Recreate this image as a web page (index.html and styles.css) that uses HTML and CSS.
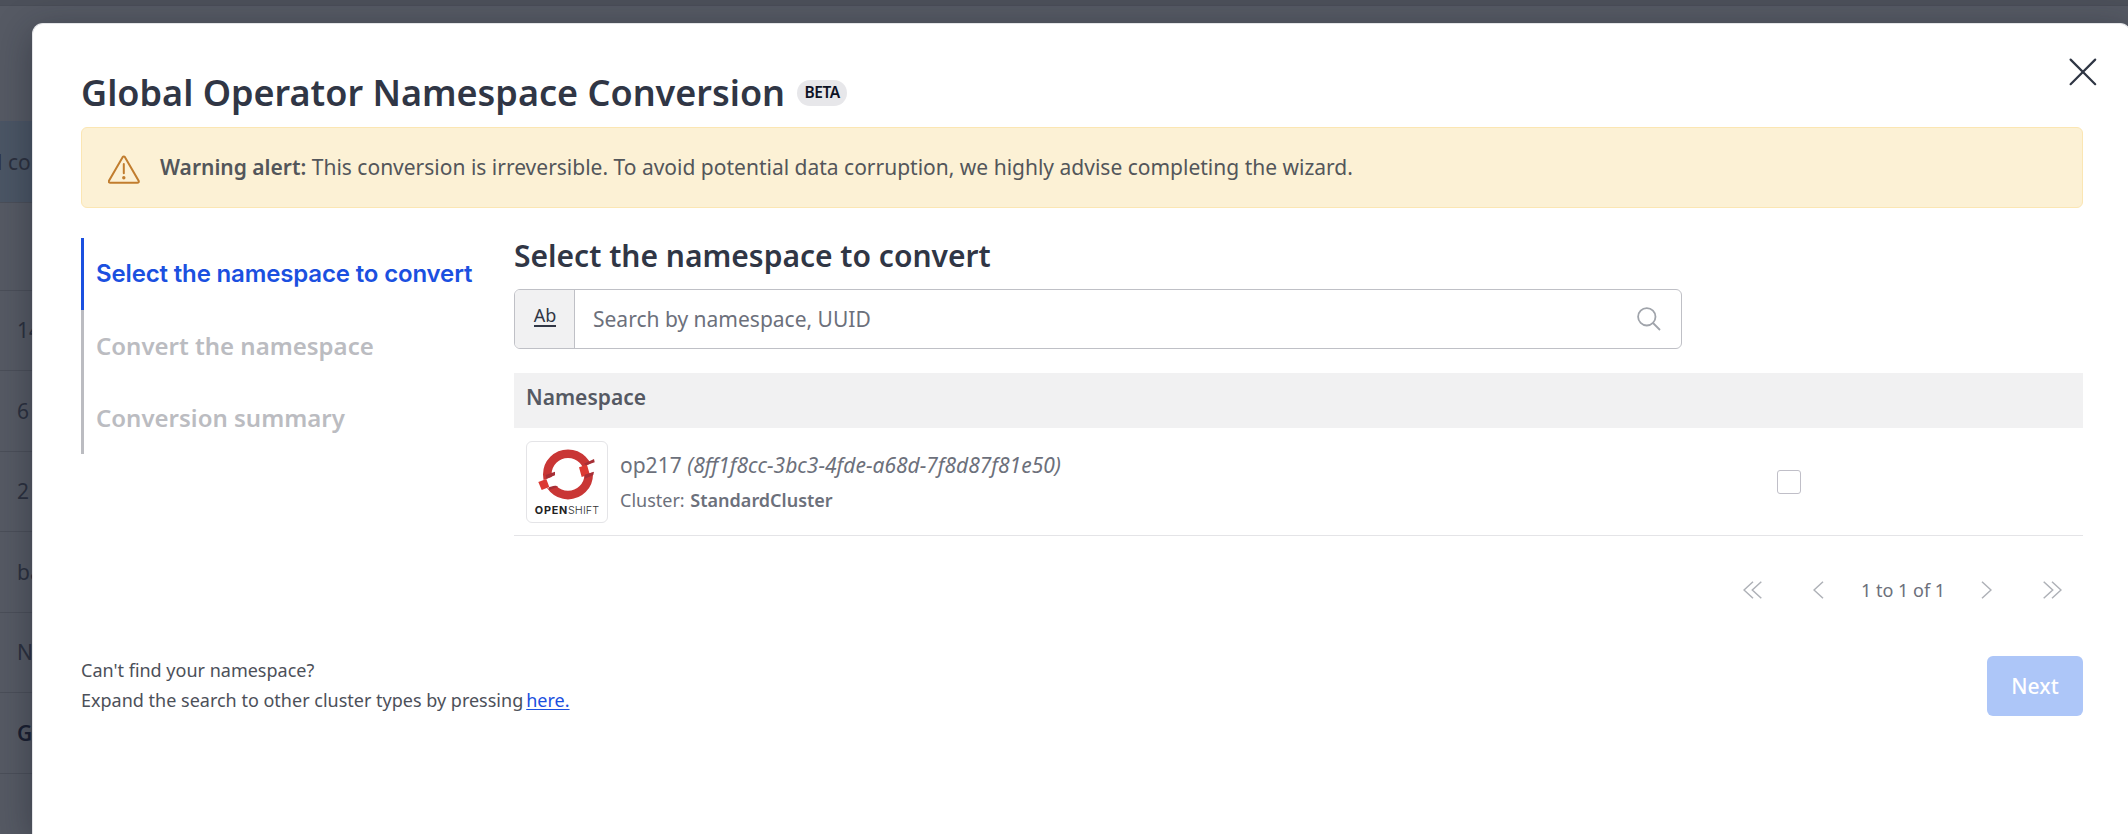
FILE: index.html
```html
<!DOCTYPE html>
<html lang="en">
<head>
<meta charset="utf-8">
<title>Global Operator Namespace Conversion</title>
<link rel="stylesheet" href="styles.css">
</head>
<body>
<div class="backdrop">
  <div class="bg-top"></div>
  <div class="bg-row bg-selected"><span class="bg-co">l co</span></div>
  <div class="bg-row bg-blank"></div>
  <div class="bg-row"><span>14</span></div>
  <div class="bg-row"><span>6</span></div>
  <div class="bg-row"><span>2</span></div>
  <div class="bg-row"><span>ba</span></div>
  <div class="bg-row"><span>N</span></div>
  <div class="bg-row"><b>G</b></div>
</div>
<div class="modal">
  <button class="close" aria-label="Close"><svg width="28" height="28" viewBox="0 0 28 28"><path d="M1.6 1.6 26.2 26.2M26.2 1.6 1.6 26.2"/></svg></button>
  <header class="title-row"><h1>Global Operator Namespace Conversion</h1><span class="badge">BETA</span></header>
  <div class="alert">
    <svg class="warn" width="34" height="30" viewBox="0 0 34 30"><path d="M14.6 2.2Q15.8.6 17 2.2L30.6 25.7Q31.4 27.8 29.2 27.8H2.4Q.2 27.8 1 25.7Z"/><path d="M15.8 9v9.3"/><circle cx="15.8" cy="22.7" r="1.7"/></svg>
    <p class="alert-text"><b>Warning alert:</b> This conversion is irreversible. To avoid potential data corruption, we highly advise completing the wizard.</p>
  </div>
  <div class="body">
    <nav class="steps">
      <div class="step active">Select the namespace to convert</div>
      <div class="step">Convert the namespace</div>
      <div class="step">Conversion summary</div>
    </nav>
    <main class="content">
      <h2>Select the namespace to convert</h2>
      <div class="search">
        <div class="prefix"><span>Ab</span></div>
        <div class="field">Search by namespace, UUID</div>
        <svg class="lens" width="24" height="24" viewBox="0 0 24 24"><circle cx="9.8" cy="9.8" r="8.7"/><path d="m16 16 7 7"/></svg>
      </div>
      <div class="thead">Namespace</div>
      <div class="row">
        <div class="logo">
          <svg width="80" height="80" viewBox="1 1 80 80">
            <circle cx="42" cy="33.4" r="20.7" fill="none" stroke="#c93635" stroke-width="8.6"/>
            <path fill="#fff" d="M60 24.5 70 20.5V30.3L62 33ZM15 40 29.5 34.5 30 44.5 22 47.5Z"/>
            <path fill="#dc3a33" d="m53 26.3 8-2.6 2.7 9.6-8 2.7ZM12.3 41l8-3 3 8-7.6 3Z"/>
            <path fill="#a62f36" d="m58 22.7 10-4.7.7 3.3-8.7 3ZM58.7 33.7l9.3-3-.7 3.3-8.6 3.7ZM19.7 34l9.3-3.3v3.6l-8.7 3.4ZM22.7 46.3l5.6-1.6 4 1-9 3.3Z"/>
            <text x="8.8" y="72.9" textLength="32.4" lengthAdjust="spacing" class="logo-text logo-bold">OPEN</text>
            <text x="42" y="72.9" textLength="31" lengthAdjust="spacing" class="logo-text">SHIFT</text>
          </svg>
        </div>
        <div class="info">
          <div class="ns">op217 <i>(8ff1f8cc-3bc3-4fde-a68d-7f8d87f81e50)</i></div>
          <div class="cluster">Cluster: <b>StandardCluster</b></div>
        </div>
        <div class="check"></div>
      </div>
      <div class="pager">
        <svg width="19" height="18" viewBox="0 0 19 18"><path d="M10 .7 1 9l9 8.3M18.3.7 9.3 9l9 8.3"/></svg>
        <svg class="prev" width="11" height="18" viewBox="0 0 11 18"><path d="M10 .7 1 9l9 8.3"/></svg>
        <span>1 to 1 of 1</span>
        <svg class="forward" width="11" height="18" viewBox="0 0 11 18"><path d="m1 .7 9 8.3-9 8.3"/></svg>
        <svg class="last" width="19" height="18" viewBox="0 0 19 18"><path d="m.7.7 9 8.3-9 8.3M9 .7 18 9l-9 8.3"/></svg>
      </div>
    </main>
  </div>
  <footer class="footer">
    <div class="help"><p>Can't find your namespace?</p><p>Expand the search to other cluster types by pressing<a href="#">here.</a></p></div>
    <button class="next">Next</button>
  </footer>
</div>
</body>
</html>
```
FILE: styles.css
```css
* { box-sizing: border-box; margin: 0; padding: 0; }
html, body { width: 100%; height: 834px; overflow: hidden; }
body { background: #565a64; font-family: "Noto Sans", sans-serif; font-size: 21px; color: #4c5059; position: relative; }
svg { display: block; fill: none; flex: none; }

.backdrop { height: 834px; overflow: hidden; color: #2b303e; }
.bg-top { height: 122px; border-bottom: 1px solid #4b5566; background: linear-gradient(#4c505a 0 5px, #494d57 5px 6px, transparent 6px); }
.bg-row { height: 80.5px; border-bottom: 1px solid #4b4f59; padding-left: 17px; display: flex; align-items: center; white-space: nowrap; }
.bg-selected { background: #4b5665; padding-left: 0; }
.bg-co { margin-left: -3px; }
.bg-blank { height: 88px; }
.bg-row b { color: #191e30; }

.modal { position: absolute; left: 32px; top: 23px; width: 2099px; height: 811px; padding: 47px 47px 0 48px; background: #fff; border: 1px solid #e4e5e8; border-bottom: 0; border-radius: 11px 11px 0 0; box-shadow: 0 8px 36px rgba(20, 24, 36, .42); }
.close { position: absolute; left: 2036px; top: 34px; background: none; border: 0; }
.close path { stroke: #2f3644; stroke-width: 2.2; stroke-linecap: round; }

.title-row { height: 56px; display: flex; align-items: center; padding-bottom: 12px; }
h1 { font-size: 36px; font-weight: 600; line-height: 44px; color: #303645; white-space: nowrap; }
.badge { margin-left: 12px; width: 50px; height: 26px; border-radius: 13px; background: #e7e7ea; color: #0d1224; font-size: 15.5px; font-weight: 600; letter-spacing: -.4px; line-height: 25px; text-align: center; }

.alert { height: 81px; border: 1px solid #fbe6b3; border-radius: 6px; background: #fcf1d5; display: flex; align-items: center; padding-left: 26px; color: #53565a; }
.warn { margin-top: 4px; }
.warn path { stroke: #c17d2e; stroke-width: 2; stroke-linecap: round; }
.warn circle { fill: #c17d2e; }
.alert-text { margin-left: 18px; padding-bottom: 1px; white-space: nowrap; }
b { font-weight: 600; }

.body { display: flex; margin-top: 30px; }
.steps { width: 433px; flex: none; }
.step { height: 72px; border-left: 3px solid #bbbcc1; padding-left: 12px; line-height: 71px; font-size: 24px; font-weight: 600; color: #bbbcc1; white-space: nowrap; }
.step.active { border-color: #1b50e0; color: #1b50e0; font-family: Inter, sans-serif; letter-spacing: -.15px; }
.content { flex: 1; }
h2 { font-size: 30px; font-weight: 600; line-height: 36px; height: 51px; color: #303645; white-space: nowrap; }
.search { width: 1168px; height: 60px; border: 1px solid #bfc0c6; border-radius: 6px; display: flex; align-items: center; overflow: hidden; }
.prefix { width: 60px; height: 58px; background: #f1f1f2; border-right: 1px solid #bfc0c6; display: flex; justify-content: center; padding: 14px 0 0 1px; color: #303645; font-size: 18px; line-height: 22px; }
.prefix span { height: 23px; border-bottom: 2px solid #303645; }
.field { flex: 1; padding-left: 18px; color: #6c707b; }
.lens { margin-right: 20px; }
.lens circle, .lens path { stroke: #a0a4ab; stroke-width: 1.8; }
.thead { margin-top: 24px; height: 55px; background: #f1f1f2; padding-left: 12px; line-height: 49px; font-weight: 600; color: #555963; }
.row { height: 108px; border-bottom: 1px solid #e4e4e7; display: flex; align-items: center; padding-left: 12px; }
.logo { width: 82px; height: 82px; border: 1px solid #e4e4e7; border-radius: 6px; }
.logo-text { font-family: Inter, sans-serif; font-size: 10.8px; font-weight: 300; fill: #333; }
.logo-bold { font-weight: 700; fill: #222; }
.info { margin-left: 12px; width: 1157px; color: #6c707b; white-space: nowrap; }
.ns { line-height: 36px; }
.cluster { font-size: 18px; line-height: 34px; }
.cluster b { margin-left: 1px; }
.check { width: 24px; height: 24px; border: 1px solid #c0bfc8; border-radius: 3px; }
.pager { height: 108px; display: flex; align-items: center; padding-left: 1229px; font-size: 18px; color: #6c707b; white-space: nowrap; }
.pager path { stroke: #aeb1b7; stroke-width: 1.5; }
.prev { margin-left: 51px; }
.pager span { margin-left: 37px; width: 84px; }
.forward { margin-left: 36px; }
.last { margin-left: 51px; }

.footer { display: flex; justify-content: space-between; margin-top: 12px; font-size: 18px; line-height: 30px; }
.help { margin-top: -1px; }
.help a { margin-left: 3px; color: #1b50e0; text-underline-offset: 2px; }
.next { width: 96px; height: 60px; border: 0; border-radius: 6px; background: #adc6f8; color: #fff; font: 500 21px/58px "Noto Sans", sans-serif; }
```
